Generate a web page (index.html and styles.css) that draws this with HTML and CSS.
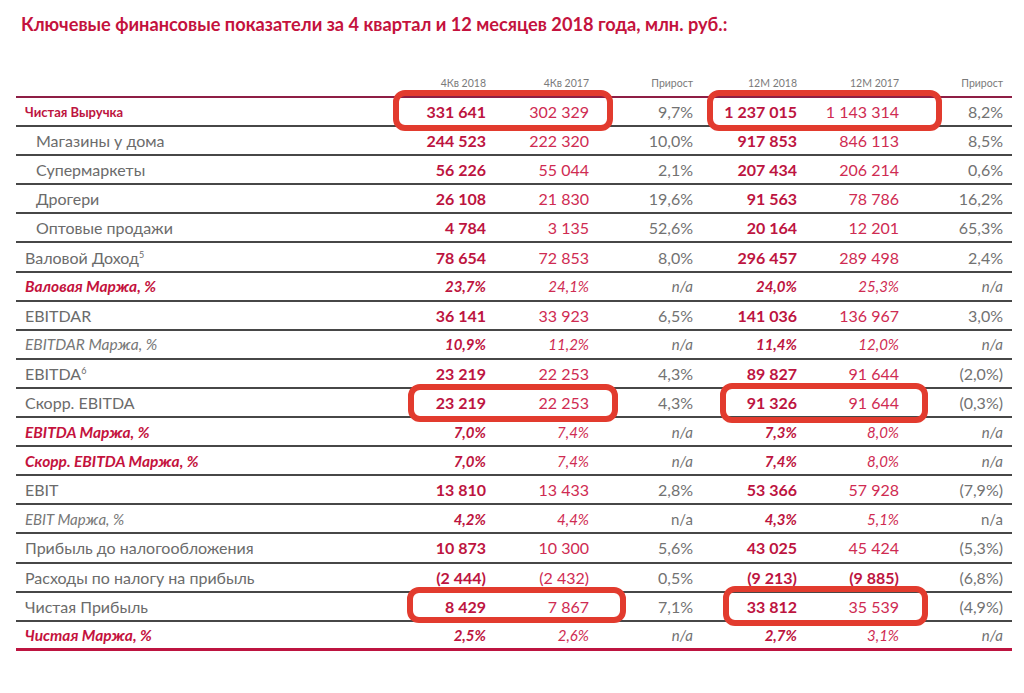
FILE: index.html
```html
<!DOCTYPE html>
<html lang="ru">
<head>
<meta charset="utf-8">
<title>Ключевые финансовые показатели</title>
<link rel="stylesheet" href="styles.css">
</head>
<body>
<div class="page">
  <h1 class="title">Ключевые финансовые показатели за 4 квартал и 12 месяцев 2018 года, млн. руб.:</h1>
  <div class="table">
    <div class="row head">
      <span></span><span>4Кв 2018</span><span>4Кв 2017</span><span>Прирост</span><span>12M 2018</span><span>12M 2017</span><span>Прирост</span>
    </div>
    <div class="rows">
      <div class="row lead"><span class="lbl">Чистая Выручка</span><span>331 641</span><span>302 329</span><span>9,7%</span><span>1 237 015</span><span>1 143 314</span><span>8,2%</span></div>
      <div class="row indent"><span class="lbl">Магазины у дома</span><span>244 523</span><span>222 320</span><span>10,0%</span><span>917 853</span><span>846 113</span><span>8,5%</span></div>
      <div class="row indent"><span class="lbl">Супермаркеты</span><span>56 226</span><span>55 044</span><span>2,1%</span><span>207 434</span><span>206 214</span><span>0,6%</span></div>
      <div class="row indent"><span class="lbl">Дрогери</span><span>26 108</span><span>21 830</span><span>19,6%</span><span>91 563</span><span>78 786</span><span>16,2%</span></div>
      <div class="row indent"><span class="lbl">Оптовые продажи</span><span>4 784</span><span>3 135</span><span>52,6%</span><span>20 164</span><span>12 201</span><span>65,3%</span></div>
      <div class="row"><span class="lbl">Валовой Доход<sup>5</sup></span><span>78 654</span><span>72 853</span><span>8,0%</span><span>296 457</span><span>289 498</span><span>2,4%</span></div>
      <div class="row margin red"><span class="lbl">Валовая Маржа, %</span><span>23,7%</span><span>24,1%</span><span>n/a</span><span>24,0%</span><span>25,3%</span><span>n/a</span></div>
      <div class="row"><span class="lbl">EBITDAR</span><span>36 141</span><span>33 923</span><span>6,5%</span><span>141 036</span><span>136 967</span><span>3,0%</span></div>
      <div class="row margin"><span class="lbl">EBITDAR Маржа, %</span><span>10,9%</span><span>11,2%</span><span>n/a</span><span>11,4%</span><span>12,0%</span><span>n/a</span></div>
      <div class="row"><span class="lbl">EBITDA<sup>6</sup></span><span>23 219</span><span>22 253</span><span>4,3%</span><span>89 827</span><span>91 644</span><span>(2,0%)</span></div>
      <div class="row"><span class="lbl">Скорр. EBITDA</span><span>23 219</span><span>22 253</span><span>4,3%</span><span>91 326</span><span>91 644</span><span>(0,3%)</span></div>
      <div class="row margin red"><span class="lbl">EBITDA Маржа, %</span><span>7,0%</span><span>7,4%</span><span>n/a</span><span>7,3%</span><span>8,0%</span><span>n/a</span></div>
      <div class="row margin red"><span class="lbl">Скорр. EBITDA Маржа, %</span><span>7,0%</span><span>7,4%</span><span>n/a</span><span>7,4%</span><span>8,0%</span><span>n/a</span></div>
      <div class="row"><span class="lbl">EBIT</span><span>13 810</span><span>13 433</span><span>2,8%</span><span>53 366</span><span>57 928</span><span>(7,9%)</span></div>
      <div class="row margin plain-na small"><span class="lbl">EBIT Маржа, %</span><span>4,2%</span><span>4,4%</span><span>n/a</span><span>4,3%</span><span>5,1%</span><span>n/a</span></div>
      <div class="row"><span class="lbl">Прибыль до налогообложения</span><span>10 873</span><span>10 300</span><span>5,6%</span><span>43 025</span><span>45 424</span><span>(5,3%)</span></div>
      <div class="row"><span class="lbl">Расходы по налогу на прибыль</span><span>(2 444)</span><span>(2 432)</span><span>0,5%</span><span>(9 213)</span><span class="strong">(9 885)</span><span>(6,8%)</span></div>
      <div class="row"><span class="lbl">Чистая Прибыль</span><span>8 429</span><span>7 867</span><span>7,1%</span><span>33 812</span><span>35 539</span><span>(4,9%)</span></div>
      <div class="row margin red last"><span class="lbl">Чистая Маржа, %</span><span>2,5%</span><span>2,6%</span><span>n/a</span><span>2,7%</span><span>3,1%</span><span>n/a</span></div>
    </div>
  </div>
  <div class="mark mark-1"></div>
  <div class="mark mark-2"></div>
  <div class="mark mark-3"></div>
  <div class="mark mark-4"></div>
  <div class="mark mark-5"></div>
  <div class="mark mark-6"></div>
</div>
</body>
</html>
```
FILE: styles.css
```css
html, body {
  margin: 0;
  padding: 0;
  background: #ffffff;
}

body {
  font-family: Lato, "Open Sans", "Liberation Sans", sans-serif;
  color: #6b6b6b;
}

.page {
  position: relative;
  width: 1024px;
  height: 693px;
  overflow: hidden;
}

.title {
  margin: 0;
  padding: 14px 0 0 21px;
  font-size: 18.2px;
  line-height: 20px;
  font-weight: 700;
  color: #c4123d;
  letter-spacing: 0;
}

.table {
  margin: 39px 0 0 16px;
  width: 996px;
}

.row {
  display: grid;
  grid-template-columns: 370px 100px 103px 104px 104px 102px 104px;
  align-items: center;
  height: 29.1px;
  box-sizing: border-box;
  border-bottom: 2px solid #474747;
  font-size: 16px;
  white-space: nowrap;
}

.row > span {
  text-align: right;
}

.row > .lbl {
  text-align: left;
  padding-left: 9px;
  color: #6b6b6b;
}

.row > span:nth-child(2),
.row > span:nth-child(5) {
  font-weight: 700;
  color: #bd1440;
}

.row > span:nth-child(3),
.row > span:nth-child(6) {
  color: #cf2b52;
}

.row > span:nth-child(4),
.row > span:nth-child(7) {
  color: #727272;
}

.row > span.strong {
  font-weight: 700;
  color: #bd1440;
}

.row.head {
  height: 25px;
  border-bottom: 2px solid #8e1e45;
  align-items: start;
  font-size: 10.5px;
  line-height: 20px;
}

.row.head > span {
  color: #7a7a7a !important;
  font-weight: 400 !important;
}

.row.lead > .lbl {
  color: #bd1440;
  font-weight: 700;
  font-size: 13px;
}

.row.indent > .lbl {
  padding-left: 20px;
}

.row sup {
  font-size: 9px;
  line-height: 0;
  vertical-align: 6px;
}

.row.margin > span {
  font-style: italic;
  font-size: 15px;
}

.row.margin > .lbl {
  font-size: 15.5px;
  color: #777777;
}

.row.margin.small > .lbl {
  font-size: 15px;
}

.row.margin.red > .lbl {
  color: #c4123d;
  font-weight: 700;
}

.row.plain-na > span:nth-child(4),
.row.plain-na > span:nth-child(7) {
  font-style: normal;
}

.row.last {
  border-bottom: 3px solid #bd1440;
}

.mark {
  position: absolute;
  box-sizing: border-box;
  border: 6px solid #e23b2e;
  border-radius: 12px;
}

.mark-1 { left: 393px; top: 90px; width: 220px; height: 41px; }
.mark-2 { left: 707px; top: 90px; width: 235px; height: 41px; }
.mark-3 { left: 408px; top: 384px; width: 210px; height: 38px; }
.mark-4 { left: 720px; top: 383px; width: 208px; height: 40px; }
.mark-5 { left: 407px; top: 587px; width: 219px; height: 36px; }
.mark-6 { left: 723px; top: 586px; width: 205px; height: 40px; }
```
